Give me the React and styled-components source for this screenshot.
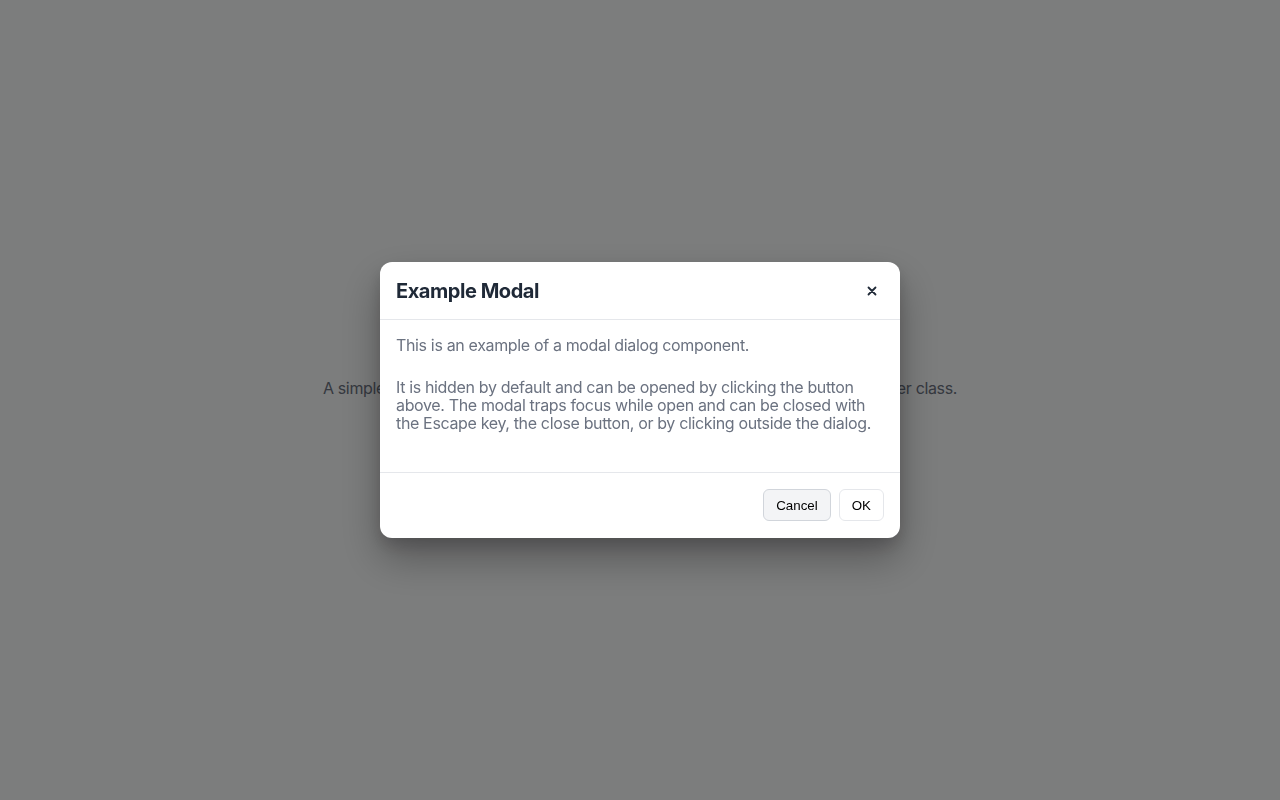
import React from "react";
import styled, { createGlobalStyle } from "styled-components";

const Global = createGlobalStyle`
  html, body { margin: 0; padding: 0; }
  body {
    background: #f9fafb;
    font-family: Inter, "Noto Sans", "Liberation Sans", sans-serif;
    letter-spacing: -0.35px;
    -webkit-font-smoothing: antialiased;
  }
`;

const Page = styled.main`
  min-height: 800px;
  box-sizing: border-box;
  padding-bottom: 24px;
  display: flex;
  flex-direction: column;
  align-items: center;
  justify-content: center;
  gap: 16px;
  color: #6b7280;
`;

const Heading = styled.h1`
  margin: 0;
  font-size: 28px;
  color: #1f2937;
`;

const Lead = styled.p`
  margin: 0;
  font-size: 16px;
  line-height: 24px;
  color: #6b7280;
`;

const OpenButton = styled.button`
  font: inherit;
  font-size: 14px;
  padding: 8px 16px;
  border-radius: 6px;
  border: 1px solid #d1d5db;
  background: #fff;
`;

const Overlay = styled.div`
  position: fixed;
  inset: 0;
  background: rgba(0, 0, 0, 0.5);
  display: flex;
  align-items: center;
  justify-content: center;
`;

const Dialog = styled.div`
  width: 520px;
  background: #fff;
  border-radius: 12px;
  box-shadow: 0 20px 40px rgba(0, 0, 0, 0.3), 0 8px 16px rgba(0, 0, 0, 0.15);
  display: flex;
  flex-direction: column;
  overflow: hidden;
`;

const Header = styled.header`
  display: flex;
  align-items: center;
  justify-content: space-between;
  padding: 17px 16px 16px;
  border-bottom: 1px solid #e5e7eb;
`;

const Title = styled.h2`
  margin: 0;
  font-size: 20px;
  line-height: 24px;
  font-weight: 700;
  letter-spacing: -0.45px;
  color: #1f2937;
`;

const CloseButton = styled.button`
  border: 0;
  background: transparent;
  padding: 0;
  width: 24px;
  height: 24px;
  display: flex;
  align-items: center;
  justify-content: center;
  color: #1f2937;
  cursor: pointer;
`;

const Body = styled.div`
  padding: 16px;
`;

const BodyText = styled.p`
  margin: 0 0 24px;
  font-size: 16px;
  line-height: 18px;
  color: #6b7280;
`;

const Footer = styled.footer`
  display: flex;
  justify-content: flex-end;
  gap: 8px;
  padding: 16px 16px 17px;
  border-top: 1px solid #e5e7eb;
`;

const Button = styled.button`
  height: 32px;
  padding: 0 12px;
  border-radius: 6px;
  font-family: "Liberation Sans", Arial, sans-serif;
  font-size: 13.333px;
  letter-spacing: 0;
  color: #000;
  cursor: pointer;
  border: 1px solid ${(p) => (p.$secondary ? "#d1d5db" : "#e5e7eb")};
  background: ${(p) => (p.$secondary ? "#f3f4f6" : "#ffffff")};
`;

export default function App() {
  return (
    <>
      <Global />
      <Page>
        <Heading>Modal</Heading>
        <Lead>
          A simple, accessible modal dialog built using vanilla JavaScript and a small helper class.
        </Lead>
        <OpenButton>Open modal</OpenButton>
      </Page>
      <Overlay>
        <Dialog role="dialog" aria-modal="true">
          <Header>
            <Title>Example Modal</Title>
            <CloseButton aria-label="Close">
              <svg width="10" height="10" viewBox="0 0 10 10">
                <path d="M1.5 1.5 L8.5 8.5 M8.5 1.5 L1.5 8.5" stroke="currentColor" strokeWidth="1.8" strokeLinecap="round" />
              </svg>
            </CloseButton>
          </Header>
          <Body>
            <BodyText>This is an example of a modal dialog component.</BodyText>
            <BodyText>
              It is hidden by default and can be opened by clicking the button above. The modal
              traps focus while open and can be closed with the Escape key, the close button, or by
              clicking outside the dialog.
            </BodyText>
          </Body>
          <Footer>
            <Button $secondary>Cancel</Button>
            <Button>OK</Button>
          </Footer>
        </Dialog>
      </Overlay>
    </>
  );
}
